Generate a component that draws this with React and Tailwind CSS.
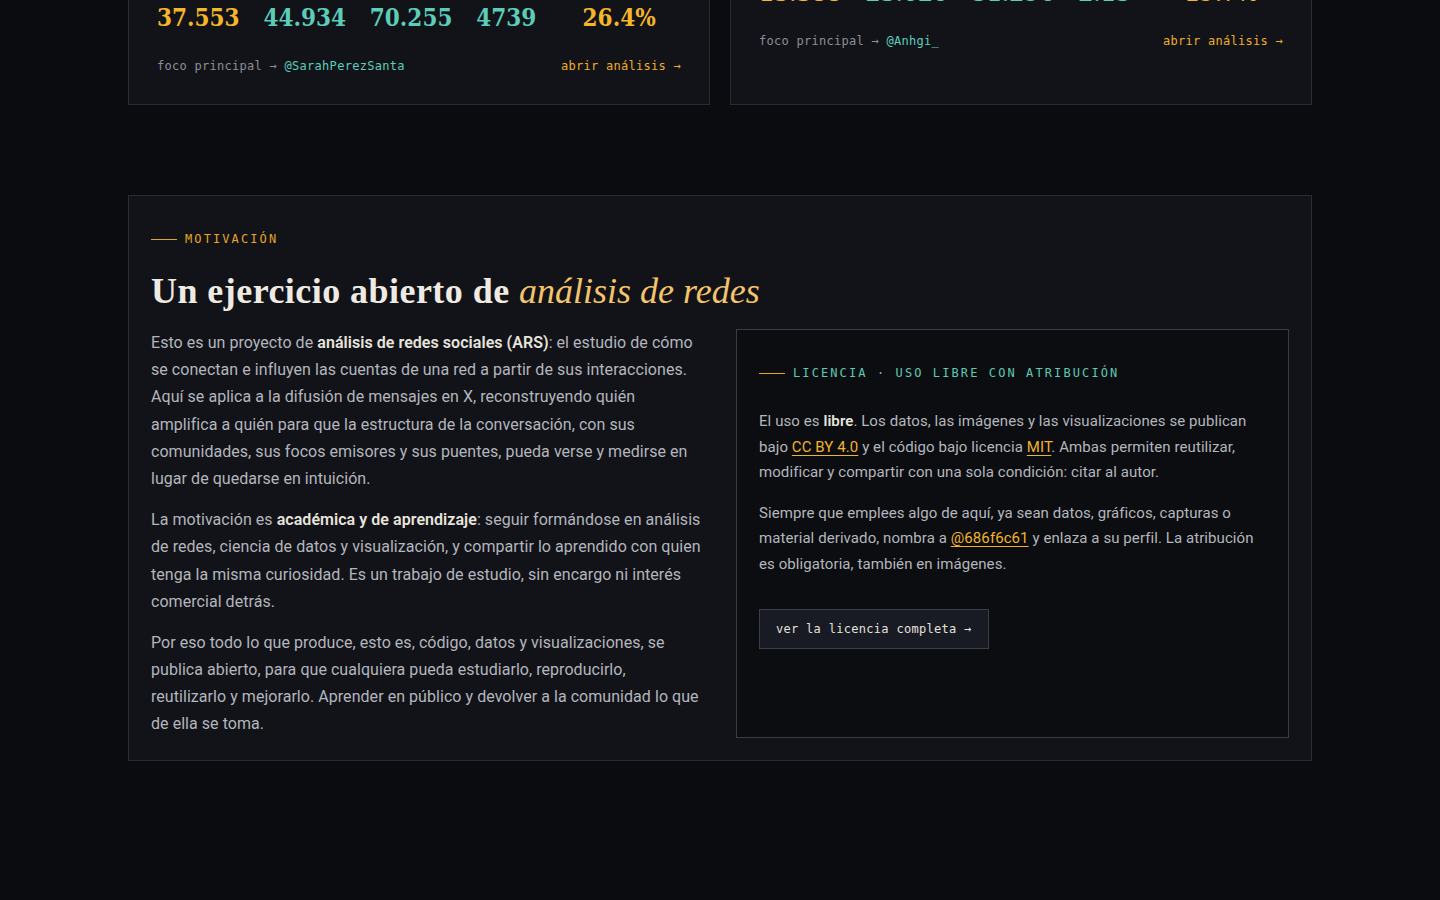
import React from "react";

const AMBER = "text-[#f4b62a]";
const TEAL = "text-[#5ccdb9]";

const leftStats = [
  { v: "37.553", c: AMBER },
  { v: "44.934", c: TEAL },
  { v: "70.255", c: TEAL },
  { v: "4739", c: TEAL },
  { v: "26.4%", c: AMBER },
];

const rightStats = [
  { v: "15.388", c: AMBER },
  { v: "23.020", c: TEAL },
  { v: "51.296", c: TEAL },
  { v: "2.15", c: TEAL },
  { v: "19.7%", c: AMBER },
];

function StatRow({ stats }) {
  return (
    <div className="mt-6 grid grid-cols-5 gap-2">
      {stats.map((s) => (
        <div
          key={s.v}
          className={`font-['DejaVu_Serif_Condensed','DejaVu_Serif',serif] font-stretch-condensed text-[24px] font-bold leading-[30px] ${s.c}`}
        >
          {s.v}
        </div>
      ))}
    </div>
  );
}

function CaseCard({ title, note, stats, handle }) {
  return (
    <div className="flex flex-col border border-[#2a2c33] bg-[#121318] px-7 pt-7 pb-[27px]">
      <div>
        <h3 className="truncate font-['Liberation_Serif',serif] text-[22px] font-bold leading-[28px] text-[#ece8df]">
          {title}
        </h3>
        {note && (
          <p className="truncate font-['Roboto',sans-serif] text-[14px] leading-[25px] text-[#9a9da5]">
            {note}
          </p>
        )}
      </div>
      <StatRow stats={stats} />
      <div className="mt-[22px] flex items-center justify-between font-['DejaVu_Sans_Mono',monospace] text-[12px] leading-[22px] tracking-[0.28px]">
        <span className="text-[#8c8f97]">
          foco principal → <span className={TEAL}>{handle}</span>
        </span>
        <a href="#" className="text-[#ecae2c]">
          abrir análisis →
        </a>
      </div>
    </div>
  );
}

function Eyebrow({ children, color }) {
  return (
    <div className="flex h-4 items-center gap-2 font-['DejaVu_Sans_Mono',monospace] text-[12px] uppercase leading-4 tracking-[2.1px]">
      <span className="h-px w-[26px] bg-[#e6a52a]" />
      <span className={color}>{children}</span>
    </div>
  );
}

function Strong({ children }) {
  return <strong className="font-semibold text-[#e7e4dd]">{children}</strong>;
}

function Link({ children }) {
  return (
    <a
      href="#"
      className="text-[#f2b230] underline decoration-1 underline-offset-[3px]"
    >
      {children}
    </a>
  );
}

export default function App() {
  return (
    <div className="flex min-h-screen flex-col overflow-hidden bg-[#0b0c0f]">
      <div className="mx-auto w-[1184px]">
        <div className="-mt-[103px] grid grid-cols-2 gap-5">
          <CaseCard
            title="La conversación en torno a la gira"
            note="Difusión de mensajes y comunidades de respuesta"
            stats={leftStats}
            handle="@SarahPerezSanta"
          />
          <CaseCard
            title="El hilo que encendió el debate"
            stats={rightStats}
            handle="@Anhgi_"
          />
        </div>

        <section className="mt-[90px] border border-[#2a2c33] bg-[#121318] px-[22px] pt-[35px] pb-[22px]">
          <Eyebrow color="text-[#e6a52a]">Motivación</Eyebrow>

          <h2 className="mt-[24px] font-['Liberation_Serif',serif] text-[36px] leading-[41px] text-[#efebe3]">
            <span className="font-bold tracking-[0.45px]">Un ejercicio abierto de </span>
            <em className="font-normal text-[#f3c46c]">análisis de redes</em>
          </h2>

          <div className="mt-[17px] grid grid-cols-2 gap-8">
            <div className="font-['Roboto',sans-serif] text-[16px] leading-[1.7] tracking-[0.05px] text-[#b3b6bd]">
              <p>
                Esto es un proyecto de <Strong>análisis de redes sociales (ARS)</Strong>: el
                estudio de cómo se conectan e influyen las cuentas de una red a partir de sus
                interacciones. Aquí se aplica a la difusión de mensajes en X, reconstruyendo
                quién amplifica a quién para que la estructura de la conversación, con sus
                comunidades, sus focos emisores y sus puentes, pueda verse y medirse en lugar
                de quedarse en intuición.
              </p>
              <p className="mt-[14px]">
                La motivación es <Strong>académica y de aprendizaje</Strong>: seguir
                formándose en análisis de redes, ciencia de datos y visualización, y compartir
                lo aprendido con quien tenga la misma curiosidad. Es un trabajo de estudio, sin
                encargo ni interés comercial detrás.
              </p>
              <p className="mt-[14px]">
                Por eso todo lo que produce, esto es, código, datos y visualizaciones, se
                publica abierto, para que cualquiera pueda estudiarlo, reproducirlo,
                reutilizarlo y mejorarlo. Aprender en público y devolver a la comunidad lo que
                de ella se toma.
              </p>
            </div>

            <div className="border border-[#3a3c43] bg-[#0c0d10] px-[22px] pt-[35px] pb-[22px]">
              <Eyebrow color="text-[#5ec9b4]">Licencia · uso libre con atribución</Eyebrow>
              <div className="mt-[28px] font-['Roboto',sans-serif] text-[15px] leading-[1.7] tracking-[0.08px] text-[#b3b6bd]">
                <p>
                  El uso es <Strong>libre</Strong>. Los datos, las imágenes y las
                  visualizaciones se publican bajo <Link>CC BY 4.0</Link> y el código bajo
                  licencia <Link>MIT</Link>. Ambas permiten reutilizar, modificar y compartir
                  con una sola condición: citar al autor.
                </p>
                <p className="mt-[15px]">
                  Siempre que emplees algo de aquí, ya sean datos, gráficos, capturas o
                  material derivado, nombra a <Link>@686f6c61</Link> y enlaza a su perfil. La
                  atribución es obligatoria, también en imágenes.
                </p>
              </div>
              <a
                href="#"
                className="mt-8 inline-block border border-[#3d3f48] bg-[#181a24] px-4 py-[11px] font-['DejaVu_Sans_Mono',monospace] text-[12px] leading-4 tracking-[0.3px] text-[#e6e2da]"
              >
                ver la licencia completa →
              </a>
            </div>
          </div>
        </section>
      </div>
    </div>
  );
}
